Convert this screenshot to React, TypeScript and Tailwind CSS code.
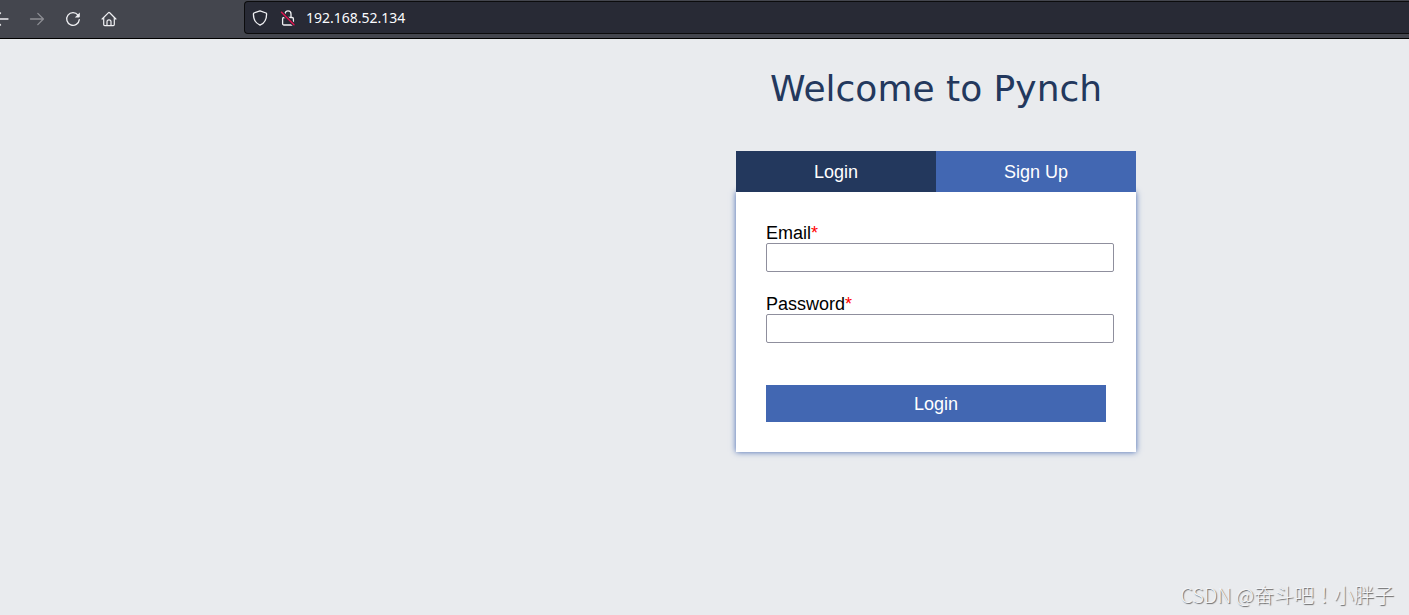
import React, { useState } from "react";

const BackIcon = () => (
  <svg width="16" height="16" viewBox="0 0 16 16" fill="none" stroke="currentColor" strokeWidth="1.3" strokeLinecap="round" strokeLinejoin="round">
    <path d="M15 8H1.5M7.5 2L1.5 8l6 6" />
  </svg>
);

const ForwardIcon = () => (
  <svg width="16" height="16" viewBox="0 0 16 16" fill="none" stroke="currentColor" strokeWidth="1.3" strokeLinecap="round" strokeLinejoin="round">
    <path d="M1.5 8h12.8M8.8 2.4L14.4 8l-5.6 5.6" />
  </svg>
);

const ReloadIcon = () => (
  <svg width="16" height="16" viewBox="0 0 16 16" fill="none">
    <path d="M13 4.1A6.3 6.3 0 1 0 14.3 8.6" stroke="currentColor" strokeWidth="1.3" strokeLinecap="round" />
    <path d="M14.8 1.4v4.2c0 .5-.3.8-.8.8H9.8z" fill="currentColor" />
  </svg>
);

const HomeIcon = () => (
  <svg width="16" height="16" viewBox="0 0 16 16" fill="none" stroke="currentColor" strokeWidth="1.2" strokeLinecap="round" strokeLinejoin="round">
    <path d="M1.1 8l6.2-6.200a1 1 0 0 1 1.400 0L14.900 8" />
    <path d="M2.7 6.800v6.800c0 .6.4 1 1 1h8.600c.6 0 1-.4 1-1V6.800" />
    <path d="M6 14.400v-3.600c0-1.100.9-2 2-2s2 .9 2 2v3.600" />
  </svg>
);

const ShieldIcon = () => (
  <svg width="16" height="16" viewBox="0 0 16 16" fill="none" stroke="currentColor" strokeWidth="1.3" strokeLinejoin="round">
    <path d="M8 .8l6 2.2c.4.2.6.5.6.9 0 5-2 9.200-6.600 11.300C3.400 13.100 1.400 8.900 1.400 3.900c0-.4.2-.7.6-.9z" />
  </svg>
);

const InsecureIcon = () => (
  <svg width="16" height="16" viewBox="0 0 16 16" fill="none" strokeLinecap="round">
    <path d="M5 7.300V3.900a3 3 0 0 1 6 0v3.400" stroke="currentColor" strokeWidth="1.300" />
    <rect x="2.600" y="7.500" width="10.800" height="7.500" rx="1.300" stroke="currentColor" strokeWidth="1.300" />
    <path d="M1.500 2.200l12.500 12.500" stroke="#282a35" strokeWidth="3.400" />
    <path d="M1.500 2.200l12.500 12.500" stroke="#e2114f" strokeWidth="1.400" />
  </svg>
);

const BrowserBar: React.FC = () => {
  const [address, setAddress] = useState("192.168.52.134");

  return (
    <header className="flex h-[39px] items-start overflow-hidden border-b border-black bg-[#44464e] text-[#f0f0f3]">
      <nav className="-ml-[7px] flex w-[251px] shrink-0 items-center gap-5 pt-[11px]">
        <button type="button" aria-label="Back">
          <BackIcon />
        </button>
        <button type="button" aria-label="Forward" disabled className="text-[#8d8e94]">
          <ForwardIcon />
        </button>
        <button type="button" aria-label="Reload">
          <ReloadIcon />
        </button>
        <button type="button" aria-label="Home">
          <HomeIcon />
        </button>
      </nav>
      <div className="mt-px flex h-[33px] flex-1 items-center gap-3 rounded-l border border-r-0 border-[#0c0c0d] bg-[#282a35] pl-[7px]">
        <ShieldIcon />
        <InsecureIcon />
        <input
          type="text"
          aria-label="Address"
          value={address}
          onChange={(e) => setAddress(e.target.value)}
          className="-ml-1 min-w-0 flex-1 bg-transparent pl-0.5 font-['Noto_Sans',sans-serif] text-sm text-[#fbfbfe] outline-none"
        />
      </div>
    </header>
  );
};

interface FieldProps {
  id: string;
  label: string;
  type: string;
  value: string;
  onChange: (value: string) => void;
}

const Field: React.FC<FieldProps> = ({ id, label, type, value, onChange }) => (
  <div className="-mr-2">
    <label htmlFor={id} className="block leading-5 text-black">
      {label}
      <span className="text-[#ff0000]">*</span>
    </label>
    <input
      id={id}
      type={type}
      value={value}
      onChange={(e) => onChange(e.target.value)}
      className="block h-[29px] w-full rounded-xs border border-[#8f8f9d] bg-white px-1"
    />
  </div>
);

const App: React.FC = () => {
  const [tab, setTab] = useState("login");
  const [email, setEmail] = useState("");
  const [password, setPassword] = useState("");

  return (
    <div className="flex min-h-screen flex-col bg-[#e9ebee] font-['Liberation_Sans',Arial,sans-serif] text-lg">
      <BrowserBar />
      <main className="flex flex-1 flex-col items-center pt-7 pl-[463px]">
        <h1 className="font-['DejaVu_Sans',sans-serif] text-4xl leading-[44px] text-[#23385d]">Welcome to Pynch</h1>
        <div className="mt-10 w-full max-w-[400px]">
          <div className="relative grid grid-cols-2 text-white">
            <button
              type="button"
              className={`h-[41px] ${tab === "login" ? "bg-[#23385d]" : "bg-[#4267b2]"}`}
              onClick={() => setTab("login")}
            >
              Login
            </button>
            <button
              type="button"
              className={`h-[41px] ${tab === "signup" ? "bg-[#23385d]" : "bg-[#4267b2]"}`}
              onClick={() => setTab("signup")}
            >
              Sign Up
            </button>
          </div>
          <form
            onSubmit={(e) => e.preventDefault()}
            className="flex flex-col gap-[22px] bg-white px-[30px] pt-[31px] pb-[30px] shadow-[0_0_6px_#4267b2]"
          >
            <Field id="email" label="Email" type="email" value={email} onChange={setEmail} />
            <Field id="password" label="Password" type="password" value={password} onChange={setPassword} />
            <button type="submit" className="mt-5 h-[37px] w-full bg-[#4267b2] text-white">
              {tab === "login" ? "Login" : "Sign Up"}
            </button>
          </form>
        </div>
      </main>
      <footer className="flex justify-end pr-[15px] pb-[5px] font-['Noto_Sans_CJK_TC',sans-serif] text-xl leading-[30px] font-light text-[#f4f5f7] [text-shadow:1px_1px_1px_#666]">
        CSDN @奋斗吧！小胖子
      </footer>
    </div>
  );
};

export default App;
